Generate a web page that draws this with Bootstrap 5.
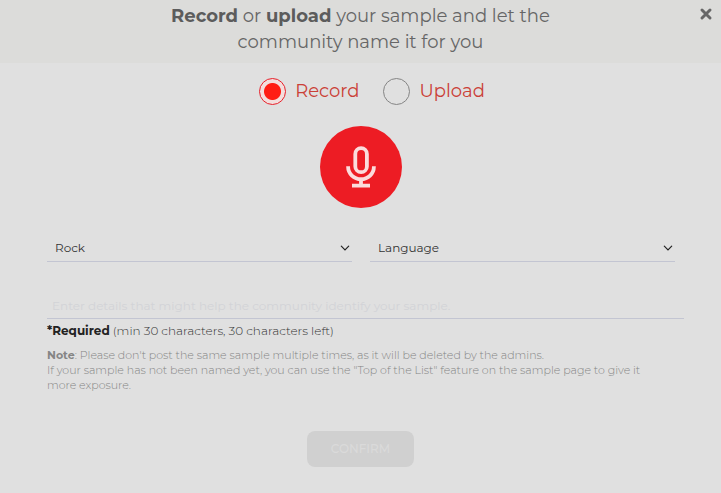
<!DOCTYPE html>
<html lang="en">
<head>
<meta charset="utf-8">
<meta name="viewport" content="width=device-width, initial-scale=1">
<title>Record or upload your sample</title>
<link href="https://cdn.jsdelivr.net/npm/bootstrap@5.3.0/dist/css/bootstrap.min.css" rel="stylesheet">
<style>
  body { font-family: Montserrat, Inter, sans-serif; background: #e0e0e0; color: #333; }
  strong { font-weight: 700; }
  .sample-head { background: #dcdcda; padding: 3px 48px 8px; }
  .sample-title { font-size: 18px; line-height: 26px; font-weight: 400; color: #666; max-width: 420px; }
  .sample-title strong { color: #5c5c5c; }
  .close-btn { top: 7px; right: 8px; line-height: 0; color: #666; }
  .mode-row { padding: 14px 0 0 23px; gap: 24px; }
  .mode-label { font-size: 18px; line-height: 28px; font-weight: 400; color: #cb4037; }
  .mode-pick { gap: 9px; }
  .mode-pick .form-check-input { width: 27px; height: 27px; margin: 0; background: transparent; border: 1px solid #858585; }
  .mode-pick .form-check-input:checked { border-color: #e8202a; background: radial-gradient(circle, #ff1d14 8px, #f3dedd 9px); }
  .mic-btn { width: 82px; height: 82px; margin-top: 21px; background: #ed1c24; color: #fbdcdc; }
  .sample-form { padding: 27px 37px 26px 47px; }
  .select-row { gap: 18px; padding-right: 9px; }
  .line-field, .line-field:focus { font-size: 12px; background-color: transparent; border: 0; border-bottom: 1px solid #c3c5d2; border-radius: 0; box-shadow: none; color: #333; }
  .select-row .line-field { height: 27px; padding: 0 24px 0 8px; background-position: right 2px center; background-size: 10px 10px;
    background-image: url("data:image/svg+xml,%3Csvg xmlns='http://www.w3.org/2000/svg' viewBox='0 0 10 10'%3E%3Cpath d='M1.3 3.2 5 6.9 8.7 3.2' fill='none' stroke='%23222' stroke-width='1.2' stroke-linecap='round'/%3E%3C/svg%3E"); }
  .detail-field { height: 26px; margin-top: 31px; padding: 0 5px; }
  .detail-field::placeholder { color: #d2d3d7; opacity: 1; }
  .required-text { font-size: 12px; line-height: 16px; margin-top: 4px; font-weight: 300; }
  .required-text strong { color: #222; }
  .note-text { font-size: 11px; line-height: 15px; margin: 9px 0 0; padding-right: 24px; font-weight: 300; color: #858585; }
  .confirm-row { padding-right: 10px; }
  .confirm-btn, .confirm-btn:disabled { margin-top: 38px; height: 36px; padding: 0 24px; font-size: 12px; font-weight: 500; border: 0; border-radius: 8px; background: #d0d0d0; color: #dadada; opacity: 1; }
</style>
</head>
<body>
<main class="position-relative">
  <header class="sample-head text-center">
    <h1 class="sample-title mx-auto mb-0"><strong>Record</strong> or <strong>upload</strong> your sample and let the community name it for you</h1>
    <button type="button" class="close-btn btn p-0 border-0 position-absolute" aria-label="Close">
      <svg width="14" height="14" viewBox="0 0 14 14" fill="none" stroke="currentColor" stroke-width="3" stroke-linecap="round"><path d="M3 3 11 11M11 3 3 11"/></svg>
    </button>
  </header>
  <form>
    <div class="mode-row d-flex justify-content-center">
      <div class="mode-pick d-flex align-items-center">
        <input class="form-check-input" type="radio" name="mode" id="modeRecord" checked>
        <label class="mode-label" for="modeRecord">Record</label>
      </div>
      <div class="mode-pick d-flex align-items-center">
        <input class="form-check-input" type="radio" name="mode" id="modeUpload">
        <label class="mode-label" for="modeUpload">Upload</label>
      </div>
    </div>
    <button type="button" class="mic-btn btn rounded-circle border-0 p-0 d-flex align-items-center justify-content-center mx-auto" aria-label="Start recording">
      <svg width="30" height="42" viewBox="0 0 30 42" fill="none" stroke="currentColor" stroke-width="3.8">
        <rect x="9.3" y="2.2" width="11.6" height="24" rx="5.8"/>
        <path d="M2.1 20.3v.5a12.9 12.4 0 0 0 25.8 0v-.5M15 33v6M6 39.6h18"/>
      </svg>
    </button>
    <div class="sample-form">
      <div class="select-row d-flex">
        <select class="form-select line-field" aria-label="Genre"><option>Rock</option></select>
        <select class="form-select line-field" aria-label="Language"><option>Language</option></select>
      </div>
      <input type="text" id="details" class="form-control line-field detail-field" aria-label="Sample details" placeholder="Enter details that might help the community identify your sample.">
      <label for="details" class="required-text d-block"><strong>*Required</strong> (min 30 characters, 30 characters left)</label>
      <p class="note-text"><strong>Note</strong>: Please don't post the same sample multiple times, as it will be deleted by the admins.<br>If your sample has not been named yet, you can use the "Top of the List" feature on the sample page to give it more exposure.</p>
      <div class="confirm-row text-center"><button type="submit" class="confirm-btn btn" disabled>CONFIRM</button></div>
    </div>
  </form>
</main>
</body>
</html>
